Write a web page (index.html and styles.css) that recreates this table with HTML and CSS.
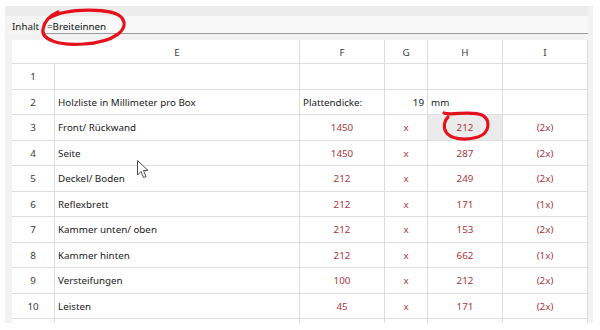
FILE: index.html
```html
<!DOCTYPE html>
<html lang="de">
<head>
<meta charset="utf-8">
<title>Holzliste</title>
<link rel="stylesheet" href="styles.css">
</head>
<body>
<div class="app">
  <div class="formula-bar">
    <span class="label">Inhalt</span>
    <div class="input">=Breiteinnen</div>
  </div>
  <div class="sheet">
    <div class="cell corner"></div>
    <div class="cell colhdr">E</div>
    <div class="cell colhdr">F</div>
    <div class="cell colhdr">G</div>
    <div class="cell colhdr">H</div>
    <div class="cell colhdr">I</div>

    <div class="cell rowhdr">1</div>
    <div class="cell"></div><div class="cell"></div><div class="cell"></div><div class="cell"></div><div class="cell"></div>

    <div class="cell rowhdr">2</div>
    <div class="cell text">Holzliste in Millimeter pro Box</div>
    <div class="cell text">Plattendicke:</div>
    <div class="cell right">19</div>
    <div class="cell text">mm</div>
    <div class="cell"></div>

    <div class="cell rowhdr">3</div>
    <div class="cell text">Front/ Rückwand</div>
    <div class="cell val">1450</div>
    <div class="cell val">x</div>
    <div class="cell val selected">212</div>
    <div class="cell val">(2x)</div>

    <div class="cell rowhdr">4</div>
    <div class="cell text">Seite</div>
    <div class="cell val">1450</div>
    <div class="cell val">x</div>
    <div class="cell val">287</div>
    <div class="cell val">(2x)</div>

    <div class="cell rowhdr">5</div>
    <div class="cell text">Deckel/ Boden</div>
    <div class="cell val">212</div>
    <div class="cell val">x</div>
    <div class="cell val">249</div>
    <div class="cell val">(2x)</div>

    <div class="cell rowhdr">6</div>
    <div class="cell text">Reflexbrett</div>
    <div class="cell val">212</div>
    <div class="cell val">x</div>
    <div class="cell val">171</div>
    <div class="cell val">(1x)</div>

    <div class="cell rowhdr">7</div>
    <div class="cell text">Kammer unten/ oben</div>
    <div class="cell val">212</div>
    <div class="cell val">x</div>
    <div class="cell val">153</div>
    <div class="cell val">(2x)</div>

    <div class="cell rowhdr">8</div>
    <div class="cell text">Kammer hinten</div>
    <div class="cell val">212</div>
    <div class="cell val">x</div>
    <div class="cell val">662</div>
    <div class="cell val">(1x)</div>

    <div class="cell rowhdr">9</div>
    <div class="cell text">Versteifungen</div>
    <div class="cell val">100</div>
    <div class="cell val">x</div>
    <div class="cell val">212</div>
    <div class="cell val">(2x)</div>

    <div class="cell rowhdr">10</div>
    <div class="cell text">Leisten</div>
    <div class="cell val">45</div>
    <div class="cell val">x</div>
    <div class="cell val">171</div>
    <div class="cell val">(2x)</div>

    <div class="cell rowhdr"></div>
    <div class="cell"></div><div class="cell"></div><div class="cell"></div><div class="cell"></div><div class="cell"></div>
  </div>
</div>
<svg class="overlay" width="600" height="330" viewBox="0 0 600 330" aria-hidden="true">
  <path class="marker" d="M 49 18 C 66 8, 113 7, 122 18 C 130 29, 115 42, 84 44 C 57 46, 41 39, 43 29 C 44 22, 49 16, 58 12"/>
  <path class="marker" d="M 444 113 C 452 116, 470 110, 482 115 C 491 120, 490 133, 478 137 C 465 141, 450 139, 446 132 C 443 127, 444 121, 448 117"/>
  <path class="cursor" d="M 137.5 160.5 L 137.5 175 L 141 171.5 L 143.5 177.5 L 146 176.5 L 143.5 170.5 L 148 170.5 Z"/>
</svg>
</body>
</html>
```

FILE: styles.css
```css
html, body {
  margin: 0;
  padding: 0;
  background: #ffffff;
}

body {
  width: 600px;
  height: 330px;
  overflow: hidden;
  position: relative;
  font-family: "Noto Sans", "Open Sans", "DejaVu Sans", sans-serif;
  font-size: 9.8px;
  color: #1a1a1a;
}

.app {
  margin: 6px 7px 0 5px;
  height: 317px;
  background: #f2f2f2;
  overflow: hidden;
  box-sizing: border-box;
  padding-right: 5px;
}

.formula-bar {
  display: flex;
  align-items: flex-end;
  height: 28px;
  background: linear-gradient(#ececec 0, #ececec 10px, #f4f4f4 10px);
}

.label {
  height: 18px;
  box-sizing: border-box;
  padding: 5px 0 0 7px;
  width: 38px;
  color: #222;
  line-height: 12px;
}

.input {
  flex: 1;
  height: 18px;
  line-height: 12px;
  padding: 5px 0 0 4px;
  box-sizing: border-box;
  background: #f8f8f8;
  border-bottom: 1px solid #9c9c9c;
  color: #111;
}

.sheet {
  margin: 6px 0 0 7px;
  width: 576px;
  background: #ffffff;
  display: grid;
  grid-template-columns: 43px 245px 85px 43px 75px 85px;
  grid-template-rows: 24px;
  grid-auto-rows: 25.5px;
}

.cell {
  border-right: 1px solid #dcdcdc;
  border-bottom: 1px solid #dedede;
  display: flex;
  align-items: center;
  justify-content: center;
  white-space: nowrap;
  overflow: hidden;
  padding-top: 1px;
  box-sizing: border-box;
}

.corner {
  border-right: none;
}

.colhdr {
  color: #3a3a3a;
}

.rowhdr {
  color: #3a3a3a;
}

.text {
  justify-content: flex-start;
  padding-left: 3px;
  color: #1a1a1a;
}

.right {
  justify-content: flex-end;
  padding-right: 3px;
  color: #1a1a1a;
}

.val {
  color: #a8363c;
}

.selected {
  background: #ebebeb;
}

.overlay {
  position: absolute;
  top: 0;
  left: 0;
  pointer-events: none;
}

.marker {
  fill: none;
  stroke: #e3121c;
  stroke-width: 3.2;
  stroke-linecap: round;
  stroke-linejoin: round;
}

.cursor {
  fill: #ffffff;
  stroke: #4a4a4a;
  stroke-width: 1;
  stroke-linejoin: round;
}
```
